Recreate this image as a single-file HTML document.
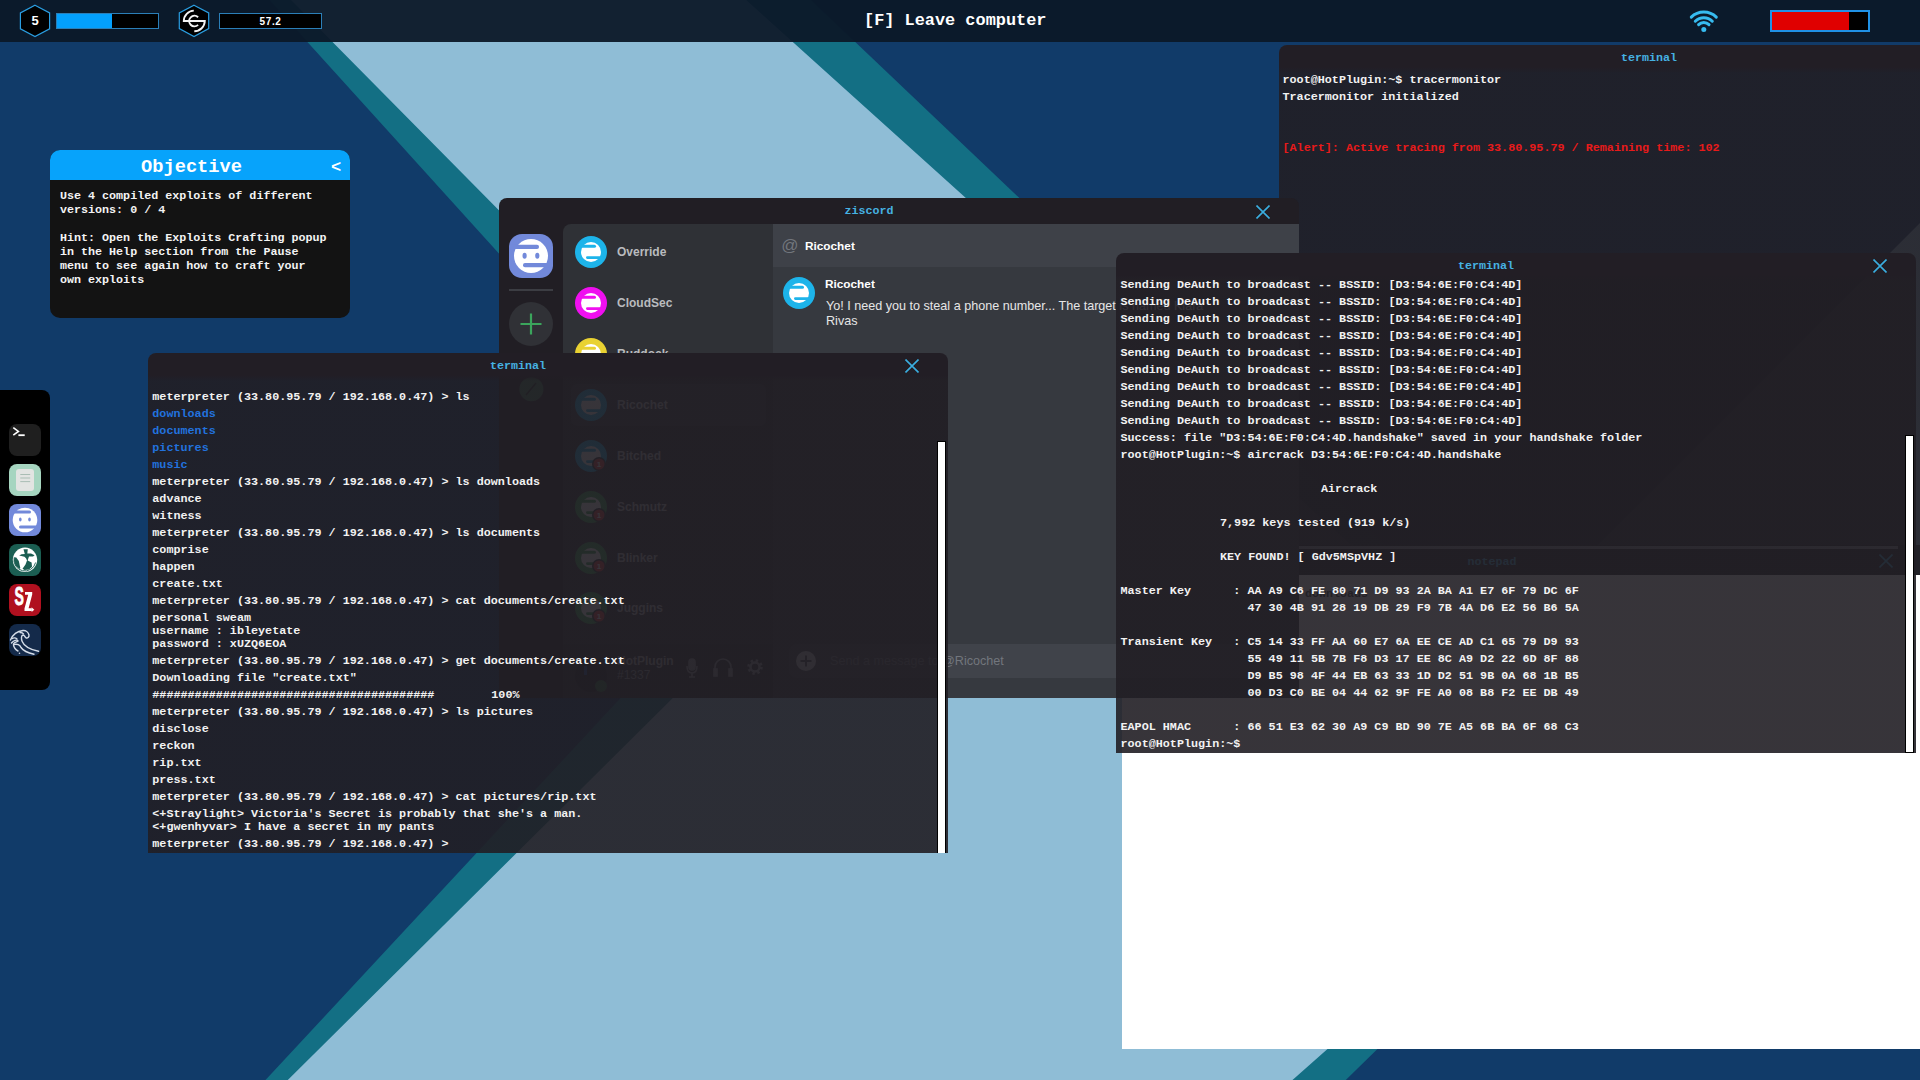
<!DOCTYPE html>
<html><head><meta charset="utf-8">
<style>
html,body{margin:0;padding:0;}
body{width:1920px;height:1080px;overflow:hidden;position:relative;background:#113b69;font-family:"Liberation Sans",sans-serif;}
.abs{position:absolute;}
.mono{font-family:"Liberation Mono",monospace;font-weight:bold;}
.win{position:absolute;width:800px;height:500px;border-radius:8px 8px 0 0;overflow:hidden;}
.term{background:linear-gradient(to bottom,#221e25 0,#221e25 22px,rgba(33,30,36,0.9) 28px);}
.ttl{position:absolute;top:6px;left:0;width:740px;text-align:center;color:#46b2e2;font-size:11.67px;line-height:14px;font-family:"Liberation Mono",monospace;font-weight:bold;}
.cls{position:absolute;width:14px;height:14px;}
pre{margin:0;font-family:"Liberation Mono",monospace;font-weight:bold;font-size:11.75px;color:#f2f2f2;white-space:pre;}
.tl{position:absolute;left:5px;line-height:17px;}
</style></head><body>

<!-- background -->
<svg class="abs" style="left:0;top:0" width="1920" height="1080">
<rect width="1920" height="1080" fill="#113b69"/>
<polygon fill="#136f84" points="269.4,0 811.1,0 1642,790 1345.8,1080 265.5,1080 762.8,545"/>
<polygon fill="#8fbdd6" points="291,0 746.2,0 1621.6,788.7 1292.5,1080 287.8,1080 828.6,543.5"/>
<polygon fill="#8fbdd6" points="1920,223 1590,553 1920,553"/>
</svg>

<!-- top-right terminal -->
<div id="tr" class="win term" style="left:1279px;top:45px;">
<div class="ttl">terminal</div>
<pre class="tl" style="left:3.5px;top:26.50px;">root@HotPlugin:~$ tracermonitor</pre>
<pre class="tl" style="left:3.5px;top:43.50px;">Tracermonitor initialized</pre>
<pre class="tl" style="left:3.5px;top:94.50px;color:#e81a1a;">[Alert]: Active tracing from 33.80.95.79 / Remaining time: 102</pre>
</div>

<!-- notepad -->
<div id="np" class="win" style="left:1122px;top:545px;height:504px;border-radius:0;background:#fff;">
<div class="abs" style="left:0;top:0;width:800px;height:30px;background:#222127;"></div>
<div class="abs" style="left:0;top:0.5px;width:776px;height:3.5px;background:#8d9098;"></div>
<div class="ttl" style="top:10px;">notepad</div>
<svg class="cls" style="left:757px;top:9px;" viewBox="0 0 14 14"><path d="M0.5,0.5 L13.5,13.5 M13.5,0.5 L0.5,13.5" stroke="#3aaee0" stroke-width="1.6"/></svg>
<pre class="abs" style="left:183px;top:41px;color:#333;font-size:11.67px;line-height:17px;">downloads</pre>
</div>

<!-- ziscord -->
<div id="zc" class="win" style="left:499px;top:198px;background:#211e24;">
<div class="ttl" style="top:6px;">ziscord</div>
<svg class="cls" style="left:757px;top:7px;" viewBox="0 0 14 14"><path d="M0.5,0.5 L13.5,13.5 M13.5,0.5 L0.5,13.5" stroke="#3aaee0" stroke-width="1.6"/></svg>
<!-- server column -->
<svg class="abs" style="left:0;top:0" width="64" height="500">
<rect x="10" y="36" width="44" height="44" rx="13" fill="#7289da"/>
<circle cx="32" cy="58" r="17" fill="#fff"/>
<rect x="10" y="46.8" width="30" height="4.1" rx="2" fill="#7289da"/>
<rect x="24" y="65.1" width="30" height="4.1" rx="2" fill="#7289da"/>
<ellipse cx="25.6" cy="57.7" rx="2.1" ry="3" fill="#7289da"/>
<ellipse cx="38.3" cy="57.7" rx="2.1" ry="3" fill="#7289da"/>
<rect x="10" y="91" width="44" height="2" fill="#3c3d43"/>
<circle cx="32" cy="126" r="22" fill="#303136"/>
<path d="M32,115.5 V136.5 M21.5,126 H42.5" stroke="#3ba55c" stroke-width="2.2"/>
<circle cx="32.4" cy="191.2" r="12" fill="#3d7a52"/><path d="M27,197 L37,185" stroke="#202a22" stroke-width="1.5"/>
</svg>
<!-- channel list -->
<div class="abs" style="left:64px;top:26px;width:210px;height:474px;background:#2f3136;border-radius:8px 0 0 0;">
<div class="abs" style="left:7.5px;top:160px;width:195px;height:42px;background:#3a3d44;border-radius:6px;"></div>
</div>
<svg class="abs" style="left:76px;top:38px" width="34" height="34"><circle cx="16" cy="16" r="16" fill="#1db4ea"/><circle cx="16" cy="16" r="10" fill="#fff"/><rect x="4" y="8.8" width="17" height="3" rx="1.5" fill="#1db4ea"/><rect x="11" y="20.3" width="18" height="2.6" rx="1.3" fill="#1db4ea"/></svg><div class="abs" style="left:118px;top:46px;font-size:12px;line-height:16px;font-weight:bold;color:#b9bbbe;">Override</div>
<svg class="abs" style="left:76px;top:89px" width="34" height="34"><circle cx="16" cy="16" r="16" fill="#f00ff0"/><circle cx="16" cy="16" r="10" fill="#fff"/><rect x="4" y="8.8" width="17" height="3" rx="1.5" fill="#f00ff0"/><rect x="11" y="20.3" width="18" height="2.6" rx="1.3" fill="#f00ff0"/></svg><div class="abs" style="left:118px;top:97px;font-size:12px;line-height:16px;font-weight:bold;color:#b9bbbe;">CloudSec</div>
<svg class="abs" style="left:76px;top:140px" width="34" height="34"><circle cx="16" cy="16" r="16" fill="#e9d232"/><circle cx="16" cy="16" r="10" fill="#fff"/><rect x="4" y="8.8" width="17" height="3" rx="1.5" fill="#e9d232"/><rect x="11" y="20.3" width="18" height="2.6" rx="1.3" fill="#e9d232"/></svg><div class="abs" style="left:118px;top:148px;font-size:12px;line-height:16px;font-weight:bold;color:#b9bbbe;">Ruddock</div>
<svg class="abs" style="left:76px;top:191px" width="34" height="34"><circle cx="16" cy="16" r="16" fill="#1db4ea"/><circle cx="16" cy="16" r="10" fill="#fff"/><rect x="4" y="8.8" width="17" height="3" rx="1.5" fill="#1db4ea"/><rect x="11" y="20.3" width="18" height="2.6" rx="1.3" fill="#1db4ea"/></svg><div class="abs" style="left:118px;top:199px;font-size:12px;line-height:16px;font-weight:bold;color:#b9bbbe;">Ricochet</div>
<svg class="abs" style="left:76px;top:242px" width="34" height="34"><circle cx="16" cy="16" r="16" fill="#1db4ea"/><circle cx="16" cy="16" r="10" fill="#fff"/><rect x="4" y="8.8" width="17" height="3" rx="1.5" fill="#1db4ea"/><rect x="11" y="20.3" width="18" height="2.6" rx="1.3" fill="#1db4ea"/><circle cx="24" cy="24" r="7" fill="#2f3136"/><circle cx="24" cy="24" r="5.5" fill="#e03b3b"/><text x="24" y="27" text-anchor="middle" font-family="Liberation Sans" font-weight="bold" font-size="8" fill="#fff">1</text></svg><div class="abs" style="left:118px;top:250px;font-size:12px;line-height:16px;font-weight:bold;color:#b9bbbe;">Bitched</div>
<svg class="abs" style="left:76px;top:293px" width="34" height="34"><circle cx="16" cy="16" r="16" fill="#3aa655"/><circle cx="16" cy="16" r="10" fill="#fff"/><rect x="4" y="8.8" width="17" height="3" rx="1.5" fill="#3aa655"/><rect x="11" y="20.3" width="18" height="2.6" rx="1.3" fill="#3aa655"/><circle cx="24" cy="24" r="7" fill="#2f3136"/><circle cx="24" cy="24" r="5.5" fill="#e03b3b"/><text x="24" y="27" text-anchor="middle" font-family="Liberation Sans" font-weight="bold" font-size="8" fill="#fff">1</text></svg><div class="abs" style="left:118px;top:301px;font-size:12px;line-height:16px;font-weight:bold;color:#b9bbbe;">Schmutz</div>
<svg class="abs" style="left:76px;top:344px" width="34" height="34"><circle cx="16" cy="16" r="16" fill="#3aa655"/><circle cx="16" cy="16" r="10" fill="#fff"/><rect x="4" y="8.8" width="17" height="3" rx="1.5" fill="#3aa655"/><rect x="11" y="20.3" width="18" height="2.6" rx="1.3" fill="#3aa655"/><circle cx="24" cy="24" r="7" fill="#2f3136"/><circle cx="24" cy="24" r="5.5" fill="#e03b3b"/><text x="24" y="27" text-anchor="middle" font-family="Liberation Sans" font-weight="bold" font-size="8" fill="#fff">1</text></svg><div class="abs" style="left:118px;top:352px;font-size:12px;line-height:16px;font-weight:bold;color:#b9bbbe;">Blinker</div>
<svg class="abs" style="left:76px;top:394px" width="34" height="34"><circle cx="16" cy="16" r="16" fill="#3aa655"/><circle cx="16" cy="16" r="10" fill="#fff"/><rect x="4" y="8.8" width="17" height="3" rx="1.5" fill="#3aa655"/><rect x="11" y="20.3" width="18" height="2.6" rx="1.3" fill="#3aa655"/><circle cx="24" cy="24" r="7" fill="#2f3136"/><circle cx="24" cy="24" r="5.5" fill="#e03b3b"/><text x="24" y="27" text-anchor="middle" font-family="Liberation Sans" font-weight="bold" font-size="8" fill="#fff">1</text></svg><div class="abs" style="left:118px;top:402px;font-size:12px;line-height:16px;font-weight:bold;color:#b9bbbe;">Juggins</div>

<!-- user panel -->
<div class="abs" style="left:64px;top:446px;width:210px;height:54px;background:#292b2f;"></div>
<svg class="abs" style="left:76px;top:462px" width="34" height="34"><circle cx="16" cy="16" r="16" fill="#1b1d22"/><rect x="9" y="6" width="3" height="9" fill="#1e4f9a"/><circle cx="26" cy="26" r="6" fill="#2a6b3b"/></svg>
<div class="abs" style="left:118px;top:456px;font-size:12px;line-height:14px;font-weight:bold;color:#a8a8a8;">HotPlugin</div>
<div class="abs" style="left:118px;top:470px;font-size:12px;line-height:14px;color:#8e9297;">#1337</div>
<svg class="abs" style="left:184px;top:459px" width="90" height="22"><g fill="none" stroke="#8e9297" stroke-width="1.6"><rect x="6" y="2" width="6" height="11" rx="3" fill="#8e9297"/><path d="M4,9 Q4,16 9,16 Q14,16 14,9 M9,16 V20 M6,20 H12"/><path d="M32,17 V10 A8,8 0 0 1 48,10 V17"/><rect x="31" y="12" width="3" height="7" fill="#8e9297"/><rect x="46" y="12" width="3" height="7" fill="#8e9297"/></g><circle cx="72" cy="10" r="6" fill="none" stroke="#8e9297" stroke-width="3.5" stroke-dasharray="2.2 2.5"/><circle cx="72" cy="10" r="4.5" fill="none" stroke="#8e9297" stroke-width="2.5"/></svg>
<!-- chat -->
<div class="abs" style="left:274px;top:26px;width:526px;height:474px;background:#36393f;"></div>
<div class="abs" style="left:274px;top:26px;width:526px;height:43px;background:#3e4148;"></div>
<svg class="abs" style="left:282px;top:39px" width="18" height="18"><text x="9" y="14" text-anchor="middle" font-family="Liberation Sans" font-size="17" fill="#72767d">@</text></svg>
<div class="abs" style="left:306px;top:40px;font-size:11.8px;line-height:16px;font-weight:bold;color:#fff;">Ricochet</div>
<svg class="abs" style="left:284px;top:79px" width="34" height="34"><circle cx="16" cy="16" r="16" fill="#1db4ea"/><circle cx="16" cy="16" r="10" fill="#fff"/><rect x="4" y="8.8" width="17" height="3" rx="1.5" fill="#1db4ea"/><rect x="11" y="20.3" width="18" height="2.6" rx="1.3" fill="#1db4ea"/></svg>
<div class="abs" style="left:326px;top:79px;font-size:11.8px;line-height:14px;font-weight:bold;color:#fff;">Ricochet</div>
<div class="abs" style="left:327px;top:100.5px;width:400px;font-size:12.6px;line-height:15px;color:#e6e6e6;">Yo! I need you to steal a phone number... The target is named Kiara Rivas</div>
<div class="abs" style="left:290px;top:446px;width:510px;height:34px;background:#40434a;border-radius:8px 0 0 8px;"></div>
<svg class="abs" style="left:296px;top:452px" width="22" height="22"><circle cx="11" cy="11" r="10" fill="#b9bbbe"/><path d="M11,5.5 V16.5 M5.5,11 H16.5" stroke="#40434a" stroke-width="2"/></svg>
<div class="abs" style="left:331px;top:456px;font-size:12.6px;line-height:15px;color:#72767d;">Send a message to @Ricochet</div>
</div>

<!-- left terminal -->
<div id="lt" class="win term" style="left:148px;top:353px;">
<div class="ttl">terminal</div>
<svg class="cls" style="left:757px;top:6px;" viewBox="0 0 14 14"><path d="M0.5,0.5 L13.5,13.5 M13.5,0.5 L0.5,13.5" stroke="#3aaee0" stroke-width="1.6"/></svg>
<pre class="tl" style="left:4.3px;top:35.70px;">meterpreter (33.80.95.79 / 192.168.0.47) &gt; ls</pre>
<pre class="tl" style="left:4.3px;top:52.70px;color:#2272de;">downloads</pre>
<pre class="tl" style="left:4.3px;top:69.70px;color:#2272de;">documents</pre>
<pre class="tl" style="left:4.3px;top:86.70px;color:#2272de;">pictures</pre>
<pre class="tl" style="left:4.3px;top:103.70px;color:#2272de;">music</pre>
<pre class="tl" style="left:4.3px;top:120.70px;">meterpreter (33.80.95.79 / 192.168.0.47) &gt; ls downloads</pre>
<pre class="tl" style="left:4.3px;top:137.70px;">advance</pre>
<pre class="tl" style="left:4.3px;top:154.70px;">witness</pre>
<pre class="tl" style="left:4.3px;top:171.70px;">meterpreter (33.80.95.79 / 192.168.0.47) &gt; ls documents</pre>
<pre class="tl" style="left:4.3px;top:188.70px;">comprise</pre>
<pre class="tl" style="left:4.3px;top:205.70px;">happen</pre>
<pre class="tl" style="left:4.3px;top:222.70px;">create.txt</pre>
<pre class="tl" style="left:4.3px;top:239.70px;">meterpreter (33.80.95.79 / 192.168.0.47) &gt; cat documents/create.txt</pre>
<pre class="tl" style="left:4.3px;top:256.70px;">personal sweam</pre>
<pre class="tl" style="left:4.3px;top:269.70px;">username : ibleyetate</pre>
<pre class="tl" style="left:4.3px;top:282.70px;">password : xUZQ6EOA</pre>
<pre class="tl" style="left:4.3px;top:299.70px;">meterpreter (33.80.95.79 / 192.168.0.47) &gt; get documents/create.txt</pre>
<pre class="tl" style="left:4.3px;top:316.70px;">Downloading file &quot;create.txt&quot;</pre>
<pre class="tl" style="left:4.3px;top:333.70px;">########################################</pre>
<pre class="tl" style="left:343.3px;top:333.70px;">100%</pre>
<pre class="tl" style="left:4.3px;top:350.70px;">meterpreter (33.80.95.79 / 192.168.0.47) &gt; ls pictures</pre>
<pre class="tl" style="left:4.3px;top:367.70px;">disclose</pre>
<pre class="tl" style="left:4.3px;top:384.70px;">reckon</pre>
<pre class="tl" style="left:4.3px;top:401.70px;">rip.txt</pre>
<pre class="tl" style="left:4.3px;top:418.70px;">press.txt</pre>
<pre class="tl" style="left:4.3px;top:435.70px;">meterpreter (33.80.95.79 / 192.168.0.47) &gt; cat pictures/rip.txt</pre>
<pre class="tl" style="left:4.3px;top:452.70px;">&lt;+Straylight&gt; Victoria&#x27;s Secret is probably that she&#x27;s a man.</pre>
<pre class="tl" style="left:4.3px;top:465.70px;">&lt;+gwenhyvar&gt; I have a secret in my pants</pre>
<pre class="tl" style="left:4.3px;top:482.70px;">meterpreter (33.80.95.79 / 192.168.0.47) &gt;</pre>
<div class="abs" style="left:788.5px;top:88px;width:7.5px;height:412px;background:#fff;border:1px solid #000;"></div>
</div>

<!-- middle terminal -->
<div id="mt" class="win term" style="left:1116px;top:253px;">
<div class="ttl">terminal</div>
<svg class="cls" style="left:757px;top:6px;" viewBox="0 0 14 14"><path d="M0.5,0.5 L13.5,13.5 M13.5,0.5 L0.5,13.5" stroke="#3aaee0" stroke-width="1.6"/></svg>
<pre class="tl" style="left:4.5px;top:23.70px;">Sending DeAuth to broadcast -- BSSID: [D3:54:6E:F0:C4:4D]</pre>
<pre class="tl" style="left:4.5px;top:40.70px;">Sending DeAuth to broadcast -- BSSID: [D3:54:6E:F0:C4:4D]</pre>
<pre class="tl" style="left:4.5px;top:57.70px;">Sending DeAuth to broadcast -- BSSID: [D3:54:6E:F0:C4:4D]</pre>
<pre class="tl" style="left:4.5px;top:74.70px;">Sending DeAuth to broadcast -- BSSID: [D3:54:6E:F0:C4:4D]</pre>
<pre class="tl" style="left:4.5px;top:91.70px;">Sending DeAuth to broadcast -- BSSID: [D3:54:6E:F0:C4:4D]</pre>
<pre class="tl" style="left:4.5px;top:108.70px;">Sending DeAuth to broadcast -- BSSID: [D3:54:6E:F0:C4:4D]</pre>
<pre class="tl" style="left:4.5px;top:125.70px;">Sending DeAuth to broadcast -- BSSID: [D3:54:6E:F0:C4:4D]</pre>
<pre class="tl" style="left:4.5px;top:142.70px;">Sending DeAuth to broadcast -- BSSID: [D3:54:6E:F0:C4:4D]</pre>
<pre class="tl" style="left:4.5px;top:159.70px;">Sending DeAuth to broadcast -- BSSID: [D3:54:6E:F0:C4:4D]</pre>
<pre class="tl" style="left:4.5px;top:176.70px;">Success: file &quot;D3:54:6E:F0:C4:4D.handshake&quot; saved in your handshake folder</pre>
<pre class="tl" style="left:4.5px;top:193.70px;">root@HotPlugin:~$ aircrack D3:54:6E:F0:C4:4D.handshake</pre>
<pre class="tl" style="left:205px;top:227.70px;">Aircrack</pre>
<pre class="tl" style="left:104px;top:261.70px;">7,992 keys tested (919 k/s)</pre>
<pre class="tl" style="left:104px;top:295.70px;">KEY FOUND! [ Gdv5MSpVHZ ]</pre>
<pre class="tl" style="left:4.5px;top:329.70px;">Master Key      : AA A9 C6 FE 80 71 D9 93 2A BA A1 E7 6F 79 DC 6F</pre>
<pre class="tl" style="left:4.5px;top:346.70px;">                  47 30 4B 91 28 19 DB 29 F9 7B 4A D6 E2 56 B6 5A</pre>
<pre class="tl" style="left:4.5px;top:380.70px;">Transient Key   : C5 14 33 FF AA 60 E7 6A EE CE AD C1 65 79 D9 93</pre>
<pre class="tl" style="left:4.5px;top:397.70px;">                  55 49 11 5B 7B F8 D3 17 EE 8C A9 D2 22 6D 8F 88</pre>
<pre class="tl" style="left:4.5px;top:414.70px;">                  D9 B5 98 4F 44 EB 63 33 1D D2 51 9B 0A 68 1B B5</pre>
<pre class="tl" style="left:4.5px;top:431.70px;">                  00 D3 C0 BE 04 44 62 9F FE A0 08 B8 F2 EE DB 49</pre>
<pre class="tl" style="left:4.5px;top:465.70px;">EAPOL HMAC      : 66 51 E3 62 30 A9 C9 BD 90 7E A5 6B BA 6F 68 C3</pre>
<pre class="tl" style="left:4.5px;top:482.70px;">root@HotPlugin:~$</pre>
<div class="abs" style="left:789px;top:182px;width:7px;height:316px;background:#fff;border:1px solid #000;"></div>
</div>

<!-- objective -->
<div id="obj" class="abs" style="left:50px;top:150px;width:300px;height:168px;border-radius:10px;background:#131313;overflow:hidden;">
<div class="abs" style="left:0;top:0;width:300px;height:30px;background:#07a3fb;"></div>
<div class="abs mono" style="left:0;top:6px;width:283px;text-align:center;color:#fff;font-size:18.7px;line-height:22px;">Objective</div>
<div class="abs mono" style="left:281px;top:8px;color:#fff;font-size:17px;line-height:20px;">&lt;</div>
<pre class="abs" style="left:10px;top:39px;font-size:11.7px;line-height:14px;color:#f4f4f4;">Use 4 compiled exploits of different
versions: 0 / 4

Hint: Open the Exploits Crafting popup
in the Help section from the Pause
menu to see again how to craft your
own exploits</pre>
</div>

<!-- dock -->
<div id="dock" class="abs" style="left:0;top:390px;width:50px;height:300px;background:#000;border-radius:0 8px 8px 0;">
<svg class="abs" style="left:0;top:0" width="50" height="300">
<!-- terminal icon y=424 -> 34 -->
<rect x="9" y="34" width="32" height="32" rx="8" fill="#1f1f1f"/>
<path d="M13.3,37.6 L18.4,41.4 L13.3,45.1" fill="none" stroke="#fff" stroke-width="1.6"/>
<rect x="18.4" y="44.3" width="6.3" height="1.8" fill="#fff"/>
<!-- notes y=464 -> 74 -->
<rect x="9" y="74" width="32" height="32" rx="8" fill="#a6d5c0"/>
<rect x="16" y="79" width="18" height="22" rx="3" fill="#e2e4e2"/>
<g stroke="#a9bdb4" stroke-width="1"><line x1="20.3" y1="84.5" x2="30.2" y2="84.5"/><line x1="20.3" y1="88" x2="30.2" y2="88"/><line x1="20.3" y1="91.6" x2="30.2" y2="91.6"/></g>
<!-- ziscord y=504 -> 114 -->
<rect x="9" y="114" width="32" height="32" rx="8" fill="#7289da"/>
<circle cx="25" cy="130" r="12.3" fill="#fff"/>
<rect x="9" y="120.6" width="22" height="3" rx="1.5" fill="#7289da"/>
<rect x="19" y="135.6" width="22" height="3" rx="1.5" fill="#7289da"/>
<ellipse cx="20.3" cy="129.5" rx="1.3" ry="2" fill="#7289da"/>
<ellipse cx="29.5" cy="129.5" rx="1.3" ry="2" fill="#7289da"/>
<!-- globe y=544 -> 154 -->
<g transform="translate(9 154)">
<rect x="0" y="0" width="32" height="32" rx="8" fill="#1b5e52"/>
<circle cx="16" cy="15.8" r="12.2" fill="#fff"/>
<path d="M5.2,13.5 A10.9,10.9 0 0 0 26.6,18.5" fill="none" stroke="#1b5e52" stroke-width="0.9"/>
<path d="M14.5,5.3 L18.8,5.3 L18.3,9.6 L22,9.6 L25.6,11.2 L24,12.6 L20,12.6 L19.3,14.5 L18.7,16.5 L22.6,18.4 L23,22.8 L20,25.5 L15.5,26 L13.5,24.8 L16.5,20.5 L18,16.5 L17,14.3 L15.5,12.8 L10.2,11.4 L12.5,10.2 L15.8,10 Z" fill="#1b5e52"/>
<path d="M5.3,13.2 L7.3,13.5 L9.8,17 L11.3,24 L10.5,25 L6.5,21.5 L5,17 Z" fill="#1b5e52"/>
</g>
<!-- sz y=584 -> 194 -->
<g transform="translate(9 194)">
<rect x="0" y="0" width="32" height="32" rx="8" fill="#b0101f"/>
<text x="0" y="0" font-family="Liberation Sans" font-weight="bold" font-size="26" fill="#fff" stroke="#fff" stroke-width="0.9" transform="translate(5.4 21.1) scale(0.54 0.98)">S</text>
<path d="M16,8 L23.2,8 L23.2,10.6 L19.6,24.3 L22.8,24.3 L22.8,27 L15.5,27 L15.5,24.6 L19.2,10.8 L16,10.8 Z" fill="#fff"/>
<path d="M22.6,23.3 L25.3,25.7 L22.6,28.1 Z" fill="#fff"/>
</g>
<!-- wave y=624 -> 234 -->
<g transform="translate(9 234)">
<rect x="0" y="0" width="32" height="32" rx="8" fill="#142a4a"/>
<g fill="none" stroke="#d5dde8" stroke-width="1.4" stroke-linecap="round">
<path d="M1.5,16 C4,10 9,7 14,6.5 C17,6.3 19.5,8.5 20,11 C20.3,13 18.5,14.5 17,13.8 C15.5,13 16,11 14,11 C12,11.5 12.2,15 13.2,17.5 C15,22 21,25.5 29.5,27.3"/>
<path d="M2.5,19 C5,16 8,15.5 9,17 C8,18 5.5,18 4.5,20 C4,23 7,26 9,27"/>
<path d="M5,20.5 C8,19.5 11,21 12,23.5 C14,26.5 19,29 25,30.2"/>
<path d="M3,14.5 C5,13.5 7,14 8,15"/>
<path d="M11,8.5 C12.5,8.5 14,9 14.5,9.8"/>
</g>
<circle cx="10.5" cy="29.2" r="0.8" fill="#d5dde8"/>
</g>
</svg>
</div>

<!-- top bar -->
<div id="top" class="abs" style="left:0;top:0;width:1920px;height:42px;background:rgba(12,24,40,0.95);">
<svg class="abs" style="left:0;top:0" width="1920" height="42">
<polygon points="35,5.2 49.6,12.9 49.6,28.8 35,36.5 20.4,28.8 20.4,12.9" fill="#000" stroke="#2a9de0" stroke-width="1.2"/>
<polygon points="194,5.2 208.7,12.9 208.7,28.6 194,36.5 179.3,28.6 179.3,12.9" fill="#000" stroke="#2a9de0" stroke-width="1.2"/>
<path d="M193.8,10.6 A10.5,10.5 0 0 0 183.8,21 L204.8,21 A10.5,10.5 0 0 1 194.3,31.3" fill="none" stroke="#f4f4f4" stroke-width="1.9"/>
<path d="M198.1,17.2 A5.3,5.3 0 1 0 198.1,24.9" fill="none" stroke="#f4f4f4" stroke-width="1.9"/>
<g fill="none" stroke="#37bbef" stroke-width="3" stroke-linecap="round">
<path d="M1698.6,24.6 A7.3,7.3 0 0 1 1709,24.6"/>
<path d="M1695.3,21.2 A11.9,11.9 0 0 1 1712.3,21.2"/>
<path d="M1691.3,17.1 A17.9,17.9 0 0 1 1716.3,17.1"/>
</g>
<circle cx="1703.8" cy="29.6" r="2.5" fill="#37bbef"/>
</svg>
<div class="abs" style="left:20px;top:5px;width:30px;height:32px;line-height:32px;text-align:center;color:#fff;font-weight:bold;font-size:13px;">5</div>
<div class="abs" style="left:56px;top:13px;width:101px;height:14px;border:1px solid #2b7fb8;background:#000;"><div style="width:55px;height:14px;background:#03a0fd;"></div></div>
<div class="abs" style="left:219px;top:13px;width:101px;height:14px;border:1px solid #2b7fb8;background:#000;color:#fff;font-size:10px;font-weight:bold;text-align:center;line-height:15px;letter-spacing:0.6px;">57.2</div>
<div class="abs mono" style="left:0;top:0;width:1920px;text-align:center;"><span class="abs" style="left:864px;top:11px;color:#fff;font-size:16.9px;line-height:20px;">[F] Leave computer</span></div>
<div class="abs" style="left:1770px;top:10px;width:96px;height:18px;border:2px solid #1f91e6;background:#000;"><div style="width:77px;height:18px;background:#e00000;"></div></div>
</div>

</body></html>
